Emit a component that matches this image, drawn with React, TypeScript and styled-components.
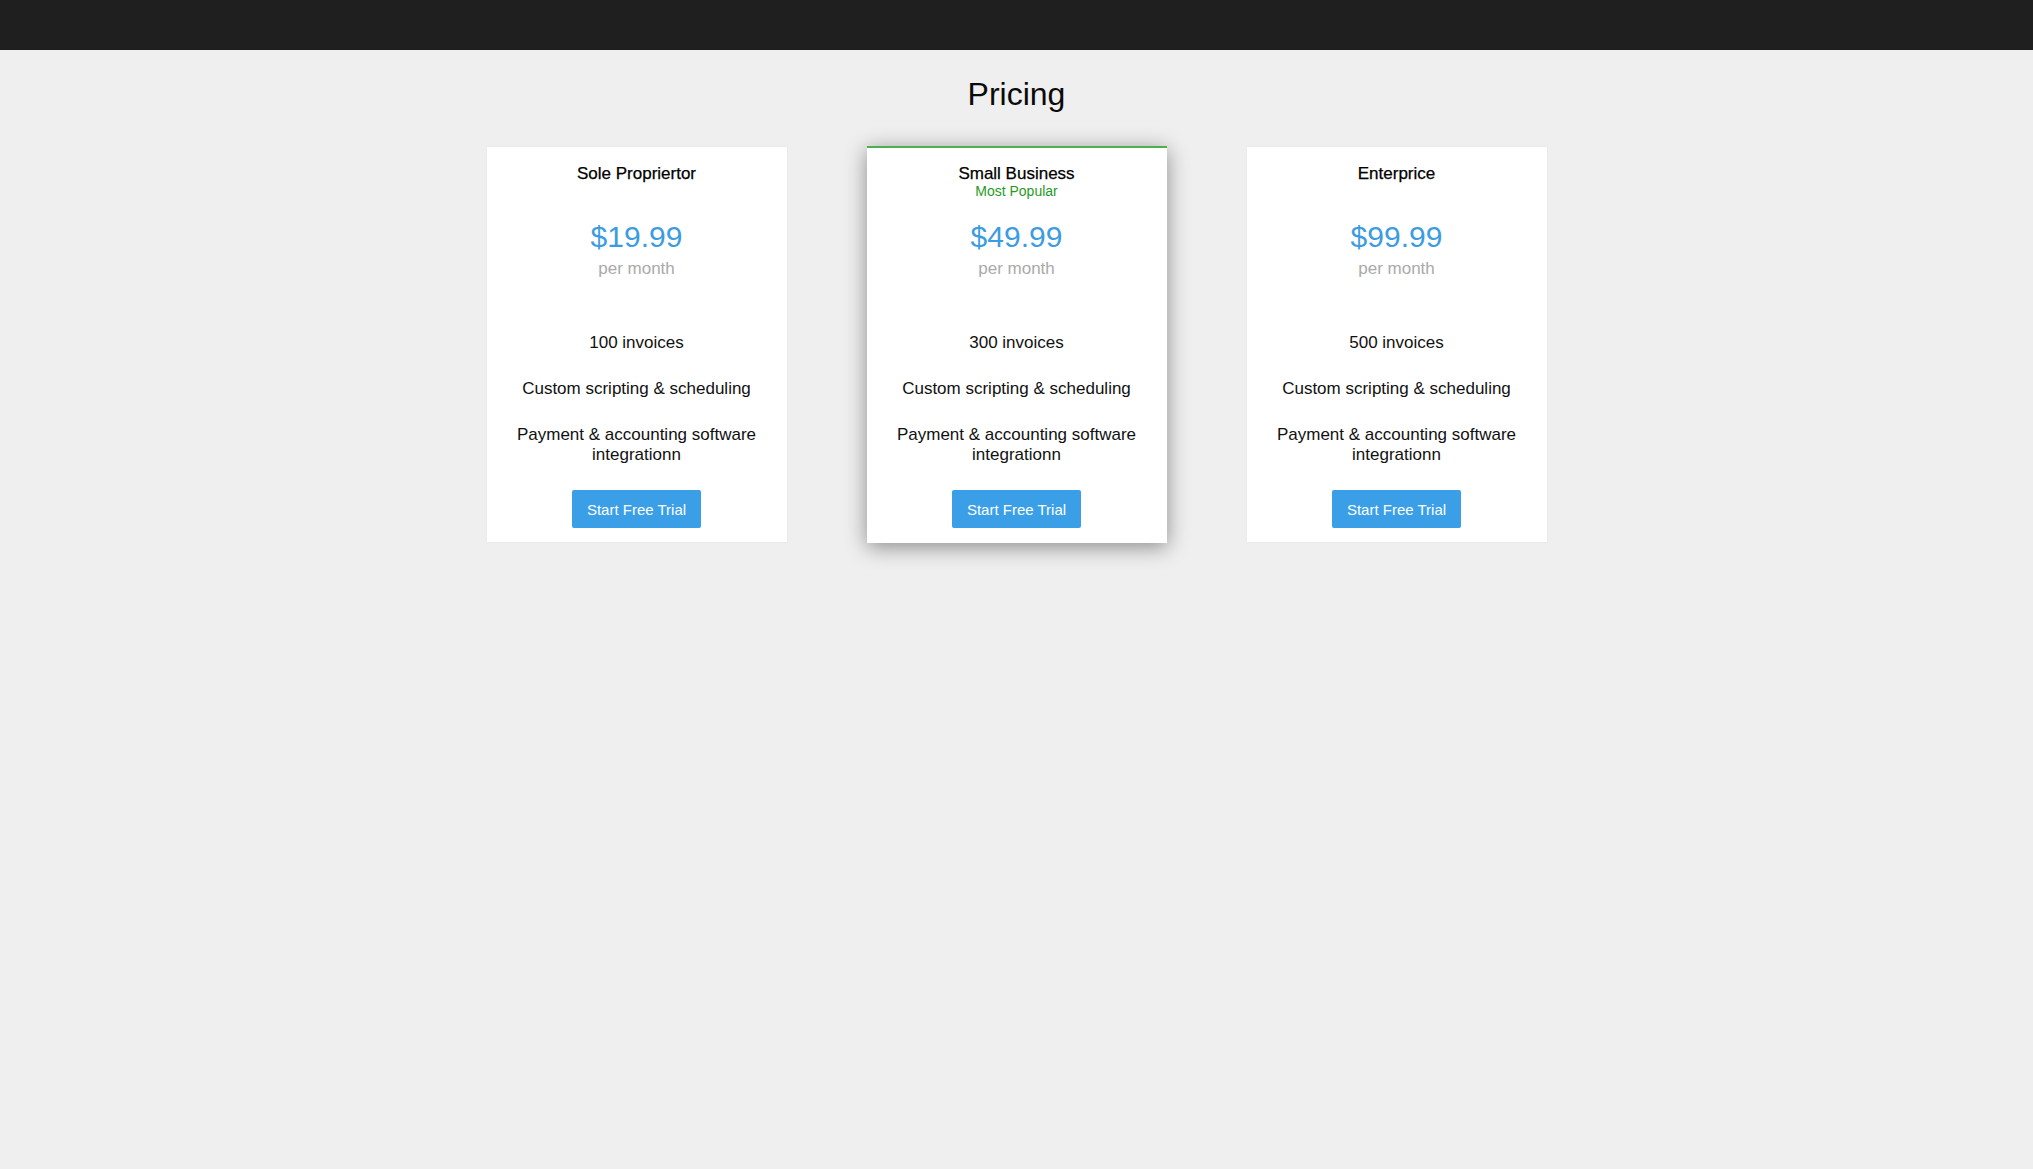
import styled, { createGlobalStyle, css } from 'styled-components';

type Plan = {
  name: string;
  badge?: string;
  price: string;
  invoices: number;
  featured?: boolean;
};

type CardProps = {
  featured?: boolean;
};

const plans: Plan[] = [
  { name: 'Sole Propriertor', price: '$19.99', invoices: 100 },
  { name: 'Small Business', badge: 'Most Popular', price: '$49.99', invoices: 300, featured: true },
  { name: 'Enterprice', price: '$99.99', invoices: 500 },
];

const GlobalStyle = createGlobalStyle`
  html, body {
    margin: 0;
    padding: 0;
    background-color: #efefef;
  }

  body {
    font-family: 'Liberation Sans', Arial, sans-serif;
    color: #111;
  }
`;

const Page = styled.div`
  min-height: 100vh;
  background-color: #efefef;
`;

const TopBar = styled.header`
  height: 50px;
  background-color: #1f1f1f;
`;

const Title = styled.h1`
  margin: 26px 0 0;
  font: 400 32px/37px 'Liberation Sans', Arial, sans-serif;
  text-align: center;
  color: #0a0a0a;
`;

const Plans = styled.section`
  display: flex;
  justify-content: center;
  gap: 80px;
  margin-top: 34px;
`;

const Card = styled.div<CardProps>`
  display: flex;
  flex-direction: column;
  align-items: center;
  box-sizing: border-box;
  width: 300px;
  height: 395px;
  padding: 17px 20px 13px;
  background-color: #fff;
  text-align: center;
  box-shadow: 0 0 2px rgba(0, 0, 0, 0.06);

  ${({ featured }) => featured && css`
    height: 397px;
    margin-top: -1px;
    padding-top: 16px;
    border-top: 2px solid #4caf50;
    box-shadow: 0 4px 20px rgba(0, 0, 0, 0.42);
  `}
`;

const CardHead = styled.div`
  height: 36px;
`;

const PlanName = styled.h2`
  margin: 0;
  font: 400 17px/20px 'Liberation Sans', Arial, sans-serif;
  color: #000;
  -webkit-text-stroke: 0.25px #000;
`;

const Badge = styled.div`
  font: 400 14px/15px 'Liberation Sans', Arial, sans-serif;
  color: #1f9a1f;
`;

const Price = styled.div`
  margin-top: 19px;
  font: 400 30px/36px 'Liberation Sans', Arial, sans-serif;
  color: #3c9ce2;
`;

const Period = styled.div`
  margin-top: 4px;
  font: 400 17px/20px 'Liberation Sans', Arial, sans-serif;
  color: #aaa;
`;

const Features = styled.ul`
  display: flex;
  flex-direction: column;
  gap: 26px;
  margin: 54px 0 0;
  padding: 0;
  list-style: none;
`;

const Feature = styled.li`
  font: 400 17px/20px 'Liberation Sans', Arial, sans-serif;
  color: #111;
`;

const TrialButton = styled.button`
  width: 129px;
  height: 38px;
  margin-top: 25px;
  padding: 0;
  border: none;
  border-radius: 2px;
  background-color: #3a9fe6;
  font: 400 15px 'Liberation Sans', Arial, sans-serif;
  color: #fff;
  cursor: pointer;
`;

const App = () => {
  return (
    <Page>
      <GlobalStyle />
      <TopBar />
      <Title>Pricing</Title>
      <Plans>
        {plans.map(plan => (
          <Card key={plan.name} featured={plan.featured}>
            <CardHead>
              <PlanName>{plan.name}</PlanName>
              {plan.badge && <Badge>{plan.badge}</Badge>}
            </CardHead>
            <Price>{plan.price}</Price>
            <Period>per month</Period>
            <Features>
              <Feature>{plan.invoices} invoices</Feature>
              <Feature>Custom scripting &amp; scheduling</Feature>
              <Feature>Payment &amp; accounting software integrationn</Feature>
            </Features>
            <TrialButton>Start Free Trial</TrialButton>
          </Card>
        ))}
      </Plans>
    </Page>
  );
};

export default App;
